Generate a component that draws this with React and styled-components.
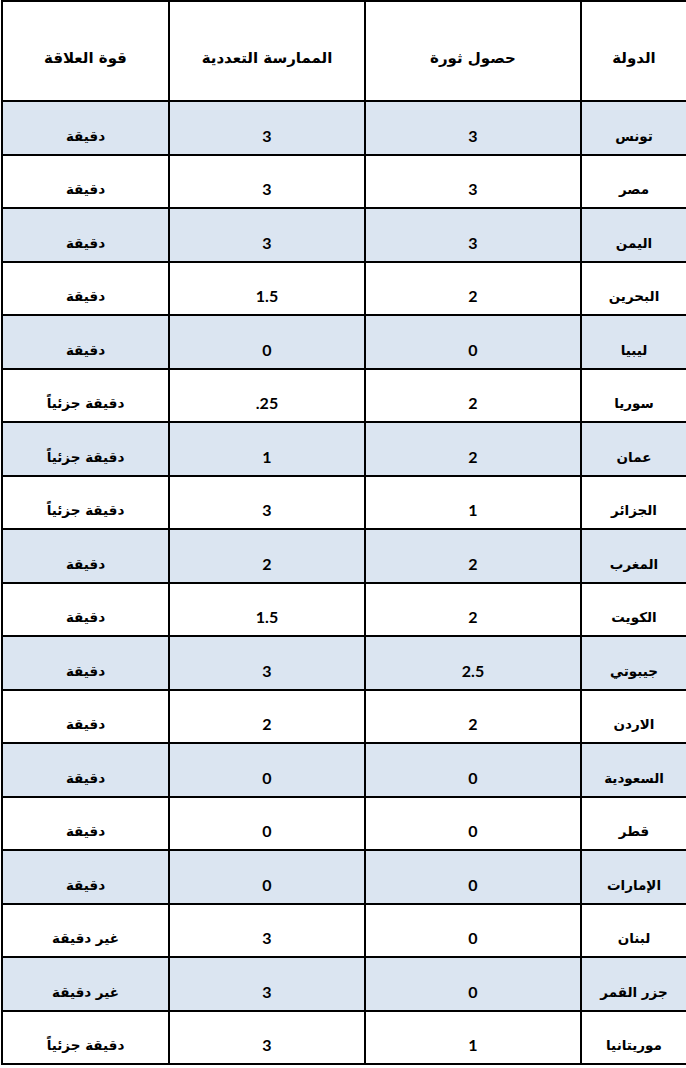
import React from "react";
import styled, { createGlobalStyle } from "styled-components";

const Global = createGlobalStyle`
  html, body { margin: 0; padding: 0; background: #ffffff; }
  body { font-family: "DejaVu Sans", "Liberation Sans", sans-serif; }
`;

const Table = styled.table`
  direction: rtl;
  border-collapse: collapse;
  table-layout: fixed;
  width: 685px;
  margin: 0 0 0 1px;
  color: #000;
`;

const HeadRow = styled.tr`
  height: 100px;
  background: #ffffff;
`;

const Row = styled.tr`
  height: 53.5px;
  background: ${(p) => (p.$shaded ? "#dbe5f1" : "#ffffff")};
`;

const HeadCell = styled.th`
  border: 2px solid #000;
  padding: 14px 0 0 0;
  font-family: "DejaVu Sans", "Liberation Sans", sans-serif;
  font-weight: bold;
  font-size: 15px;
  text-align: center;
  vertical-align: middle;
`;

const Cell = styled.td`
  border: 2px solid #000;
  padding: 0 0 10px 0;
  font-family: "DejaVu Sans", "Liberation Sans", sans-serif;
  font-weight: bold;
  font-size: 13.5px;
  line-height: 16px;
  text-align: center;
  vertical-align: bottom;
  white-space: nowrap;
`;

const NumCell = styled(Cell)`
  direction: ltr;
  font-family: Lato, "Open Sans", sans-serif;
  font-size: 16px;
`;

const Col = styled.col`
  width: ${(p) => p.$w}px;
`;

const rows = [
  ["تونس", "3", "3", "دقيقة"],
  ["مصر", "3", "3", "دقيقة"],
  ["اليمن", "3", "3", "دقيقة"],
  ["البحرين", "2", "1.5", "دقيقة"],
  ["ليبيا", "0", "0", "دقيقة"],
  ["سوريا", "2", ".25", "دقيقة جزئياً"],
  ["عمان", "2", "1", "دقيقة جزئياً"],
  ["الجزائر", "1", "3", "دقيقة جزئياً"],
  ["المغرب", "2", "2", "دقيقة"],
  ["الكويت", "2", "1.5", "دقيقة"],
  ["جيبوتي", "2.5", "3", "دقيقة"],
  ["الاردن", "2", "2", "دقيقة"],
  ["السعودية", "0", "0", "دقيقة"],
  ["قطر", "0", "0", "دقيقة"],
  ["الإمارات", "0", "0", "دقيقة"],
  ["لبنان", "0", "3", "غير دقيقة"],
  ["جزر القمر", "0", "3", "غير دقيقة"],
  ["موريتانيا", "1", "3", "دقيقة جزئياً"],
];

export default function App() {
  return (
    <>
      <Global />
      <Table>
        <colgroup>
          <Col $w={106} />
          <Col $w={216} />
          <Col $w={196} />
          <Col $w={167} />
        </colgroup>
        <thead>
          <HeadRow>
            <HeadCell>الدولة</HeadCell>
            <HeadCell>حصول ثورة</HeadCell>
            <HeadCell>الممارسة التعددية</HeadCell>
            <HeadCell>قوة العلاقة</HeadCell>
          </HeadRow>
        </thead>
        <tbody>
          {rows.map((r, i) => (
            <Row key={i} $shaded={i % 2 === 0}>
              <Cell>{r[0]}</Cell>
              <NumCell>{r[1]}</NumCell>
              <NumCell>{r[2]}</NumCell>
              <Cell>{r[3]}</Cell>
            </Row>
          ))}
        </tbody>
      </Table>
    </>
  );
}
